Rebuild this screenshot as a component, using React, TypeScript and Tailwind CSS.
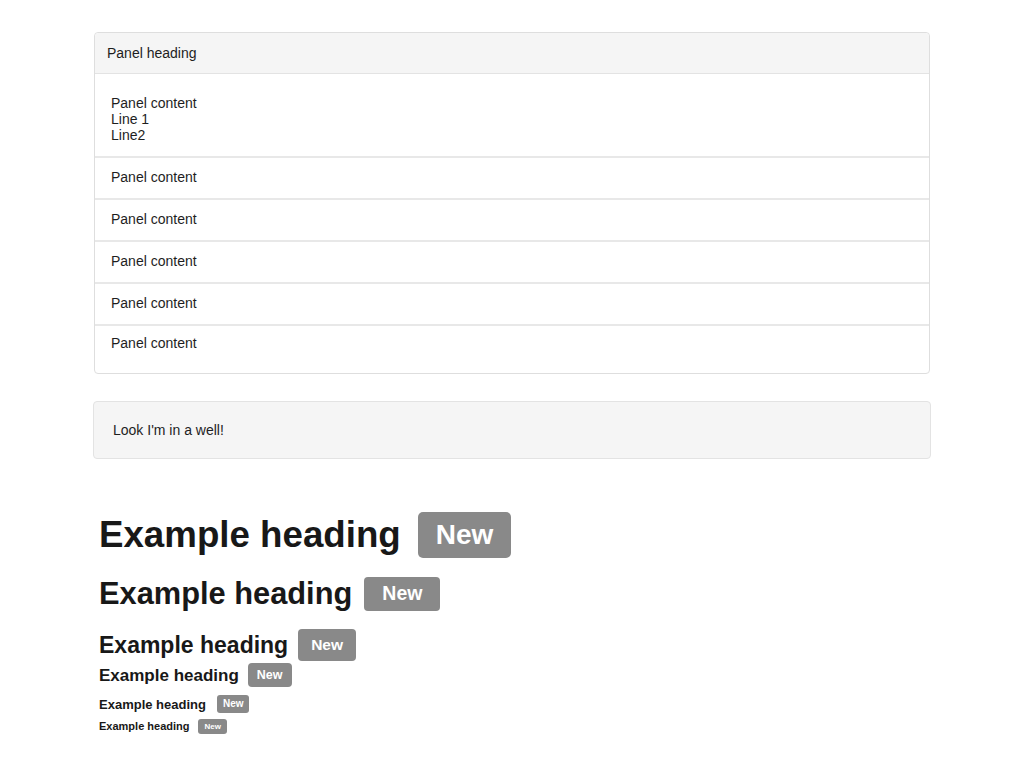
import React from 'react';

const rows = ['Panel content', 'Panel content', 'Panel content', 'Panel content'];

const headings = [
  { size: 'text-[36.7px]', mt: 'mt-[53px]', gap: 'gap-[17px]', label: 'h-[46px] px-[18px] text-[28px] rounded-[5px]' },
  { size: 'text-[30.8px]', mt: 'mt-[19px]', gap: 'gap-[12px]', label: 'h-[34px] px-[18px] text-[19.5px] rounded-[4px]' },
  { size: 'text-[23px]', mt: 'mt-[18px]', gap: 'gap-[10px]', label: 'h-[32px] px-[13px] text-[15.5px] rounded-[4px]' },
  { size: 'text-[17px]', mt: 'mt-[2px]', gap: 'gap-[9px]', label: 'h-[24px] px-[9px] text-[12.5px] rounded-[4px]' },
  { size: 'text-[13px]', mt: 'mt-[8px]', gap: 'gap-[11px]', label: 'h-[18px] px-[6px] text-[10px] rounded-[3px]' },
  { size: 'text-[11px]', mt: 'mt-[6px]', gap: 'gap-[9px]', label: 'h-[15px] px-[6px] text-[8px] rounded-[3px]' },
];

export default function App() {
  return (
    <div className="min-h-screen bg-white pt-8 text-[14px] leading-4 text-[#1e1e1e]" style={{ fontFamily: '"Liberation Sans", Arial, sans-serif' }}>
      <div className="mx-auto w-[838px]">
        {/* Panel */}
        <div className="mx-px rounded-[4px] border border-[#dedede] bg-white">
          <div className="rounded-t-[4px] border-b border-[#e3e3e3] bg-[#f5f5f5] px-3 py-3">Panel heading</div>
          <div className="border-b-2 border-[#e8e8e8] px-4 pt-[21px] pb-[13px]">
            <div>Panel content</div>
            <div>Line 1</div>
            <div>Line2</div>
          </div>
          {rows.map((r, i) => (
            <div key={i} className="border-b-2 border-[#e8e8e8] px-4 pt-[11px] pb-[13px]">{r}</div>
          ))}
          <div className="px-4 pt-[9px] pb-[22px]">Panel content</div>
        </div>

        {/* Well */}
        <div className="mt-[27px] rounded-[4px] border border-[#e3e3e3] bg-[#f5f5f5] px-[19px] py-[20px] leading-4">
          Look I'm in a well!
        </div>

        {/* Headings */}
        <div className="pl-[6px]">
          {headings.map((h, i) => (
            <div key={i} className={`flex items-center ${h.mt} ${h.gap}`}>
              <span className={`${h.size} font-bold leading-none text-[#181818]`}>Example heading</span>
              <span className={`flex items-center justify-center bg-[#898989] font-bold leading-none text-white ${h.label}`}>New</span>
            </div>
          ))}
        </div>
      </div>
    </div>
  );
}
